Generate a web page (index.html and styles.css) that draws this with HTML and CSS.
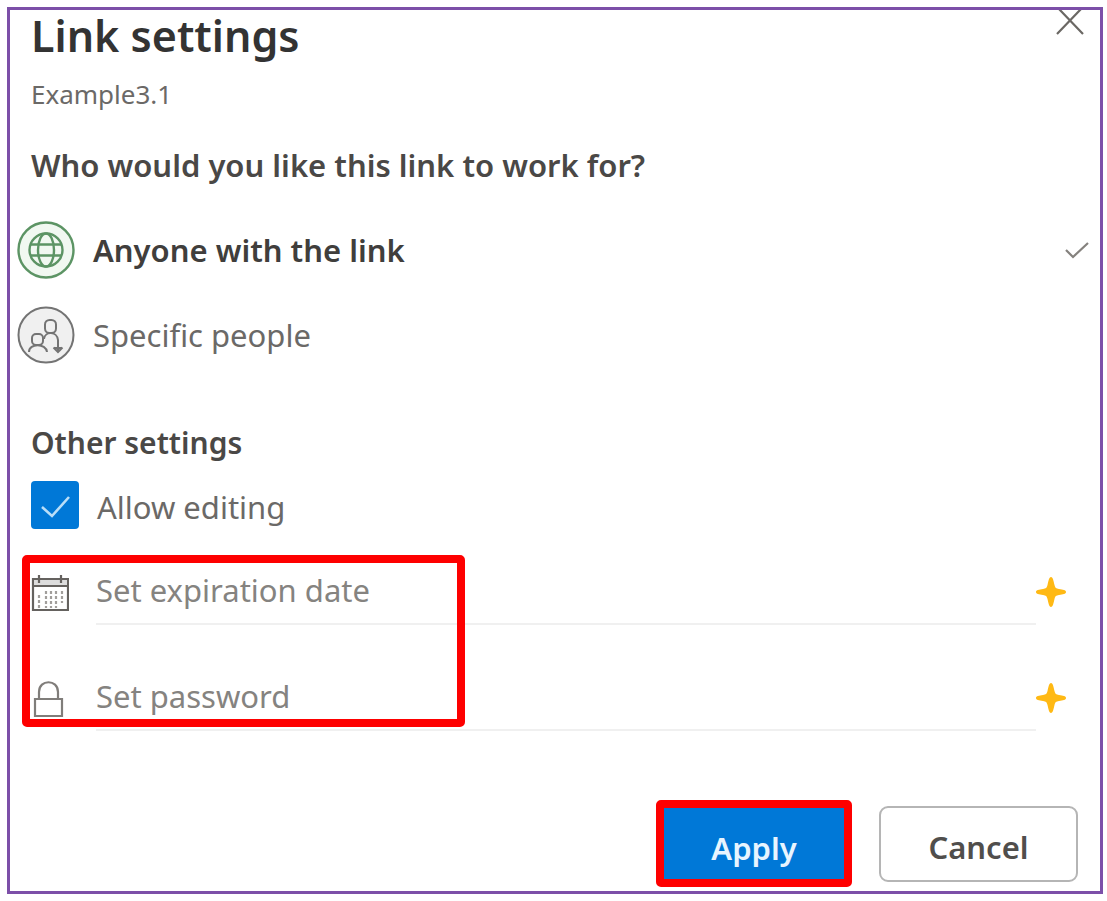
FILE: index.html
```html
<!DOCTYPE html>
<html lang="en">
<head>
<meta charset="utf-8">
<meta name="viewport" content="width=device-width, initial-scale=1">
<title>Link settings</title>
<link rel="stylesheet" href="styles.css">
</head>
<body>
<main class="dialog">
  <header class="header">
    <h1 class="title">Link settings</h1>
    <button class="close" type="button" aria-label="Close">
      <svg width="30" height="26" viewBox="0 0 30 26" fill="none" stroke="#6b6864" stroke-width="2.200"><path d="M4 -1 28 24M26 -1 2 24"/></svg>
    </button>
  </header>
  <p class="file">Example3.1</p>
  <form class="form">
    <fieldset class="group audience">
      <legend class="question">Who would you like this link to work for?</legend>
      <label class="option">
        <input class="hidden-radio" type="radio" name="audience" checked>
        <svg class="badge" viewBox="0 0 58 58" fill="none" stroke="#5c9464" stroke-width="2.400">
          <circle cx="29" cy="29" r="27.500" fill="#f1f8f1"/>
          <circle cx="29" cy="29" r="16.500"/>
          <ellipse cx="29" cy="29" rx="8" ry="16.500"/>
          <path d="M14 23.500H44M14 34.500H44"/>
        </svg>
        <span class="option-text">Anyone with the link</span>
        <svg class="tick" viewBox="0 0 24 18" fill="none" stroke="#85827e" stroke-width="2.200"><path d="M1 9 8 16 23 2"/></svg>
      </label>
      <label class="option">
        <input class="hidden-radio" type="radio" name="audience">
        <svg class="badge" viewBox="0 0 58 58" fill="none" stroke="#747474" stroke-width="2">
          <circle cx="29" cy="29" r="27.500" fill="#f0f0f0"/>
          <rect x="28" y="14" width="11" height="13" rx="4.500"/>
          <rect x="15" y="28" width="11" height="11" rx="4"/>
          <path d="M12 46C12 37 29 37 30 46M27 33C28 25 40 25 41 34V45M36.500 41.500 41 46 45.500 41.500M37 42H45"/>
        </svg>
        <span class="option-text">Specific people</span>
        <svg class="tick" viewBox="0 0 24 18" fill="none" stroke="#85827e" stroke-width="2.200"><path d="M1 9 8 16 23 2"/></svg>
      </label>
    </fieldset>
    <fieldset class="group other">
      <legend class="subtitle">Other settings</legend>
      <label class="check">
        <span class="check-box">
          <input class="check-input" type="checkbox" checked>
          <svg class="check-mark" viewBox="0 0 48 48" fill="none" stroke="#b9def8" stroke-width="2.600"><path d="M11 26 21 35 38 16"/></svg>
        </span>
        <span class="check-text">Allow editing</span>
      </label>
      <div class="fields">
        <div class="field">
          <label class="field-icon" for="expiration" aria-label="Expiration date">
            <svg width="38" height="38" viewBox="0 0 38 38" fill="none" stroke="#65625f" stroke-width="2.200">
              <path d="M2 6H37V37H2Z"/><path d="M3 7H36V12H3Z" fill="#ddd" stroke="none"/><path d="M2 13H37M8 2V10M30 2V10"/>
              <path d="M8 22V35M15 18V35M20 18V35M25 18V35M31 18V30" stroke="#a19e9b" stroke-dasharray="3 2"/>
            </svg>
          </label>
          <input class="field-input" id="expiration" type="text" placeholder="Set expiration date">
          <svg class="star" viewBox="0 0 30 30" fill="#ffb914"><path d="M15 0C17 0 17.500 4 18.500 8 19.300 11 20 11.500 23 12 27 12.700 30 13 30 15S27 17.300 23 18C20 18.500 19.300 19 18.500 22 17.500 26 17 30 15 30S12.500 26 11.500 22C10.700 19 10 18.500 7 18 3 17.300 0 17 0 15S3 12.700 7 12C10 11.500 10.700 11 11.500 8 12.500 4 13 0 15 0Z"/></svg>
        </div>
        <div class="field">
          <label class="field-icon" for="password" aria-label="Password">
            <svg width="38" height="38" viewBox="0 0 38 38" fill="none" stroke="#807d7a" stroke-width="2.200"><path d="M4 20H31V37H4ZM8 20V13C8 0 27 0 27 13V20"/></svg>
          </label>
          <input class="field-input" id="password" type="text" placeholder="Set password">
          <svg class="star" viewBox="0 0 30 30" fill="#ffb914"><path d="M15 0C17 0 17.500 4 18.500 8 19.300 11 20 11.500 23 12 27 12.700 30 13 30 15S27 17.300 23 18C20 18.500 19.300 19 18.500 22 17.500 26 17 30 15 30S12.500 26 11.500 22C10.700 19 10 18.500 7 18 3 17.300 0 17 0 15S3 12.700 7 12C10 11.500 10.700 11 11.500 8 12.500 4 13 0 15 0Z"/></svg>
        </div>
        <div class="highlight"></div>
      </div>
    </fieldset>
    <footer class="actions">
      <button class="button apply" type="submit">Apply</button>
      <button class="button cancel" type="button">Cancel</button>
    </footer>
  </form>
</main>
</body>
</html>
```
FILE: styles.css
```css
* { box-sizing: border-box; }
body {
  margin: 0;
  padding: 7px 4px 8px 7px;
  background: #fff;
  color: #6b6967;
  font: 400 31px/40px "Noto Sans", "Open Sans", sans-serif;
}
.dialog {
  border: 3px solid #7c4fa8;
  padding: 0 11px 4px 7px;
}
.header {
  display: flex;
  justify-content: space-between;
  align-items: flex-start;
  padding-left: 14px;
}
.title {
  margin: 0;
  color: #333;
  font-size: 43px;
  font-weight: 600;
  line-height: 52px;
}
.close {
  display: flex;
  margin-right: 4px;
  padding: 0;
  border: 0;
  background: none;
}
.file {
  margin: 12px 0 0;
  padding-left: 14px;
  font-size: 26px;
  line-height: 40px;
}
.form { margin: 0; }
.group {
  min-width: 0;
  margin: 0;
  padding: 0;
  border: 0;
}
.audience { margin-top: 31px; }
.other { margin-top: 32px; }
.question, .subtitle {
  padding: 0 0 0 14px;
  color: #4a4846;
  font-weight: 600;
}
.question { margin-bottom: 36px; }
.subtitle { margin-bottom: 18px; font-size: 30px; }
.option {
  display: flex;
  align-items: center;
  gap: 18px;
  height: 58px;
  margin-bottom: 27px;
}
.hidden-radio {
  position: absolute;
  opacity: 0;
}
.badge { width: 58px; height: 58px; }
.tick {
  width: 24px;
  height: 18px;
  margin-left: auto;
  visibility: hidden;
}
.hidden-radio:checked ~ .option-text { color: #403e3c; font-weight: 600; }
.hidden-radio:checked ~ .tick { visibility: visible; }
.check {
  display: flex;
  align-items: center;
  gap: 18px;
  margin-left: 14px;
}
.check-text { padding-top: 4px; }
.check-box {
  display: grid;
  width: 48px;
  height: 48px;
}
.check-input, .check-mark { grid-area: 1 / 1; }
.check-input {
  appearance: none;
  width: 48px;
  height: 48px;
  margin: 0;
  border-radius: 4px;
  background: #0078d7;
}
.check-mark { pointer-events: none; }
.fields {
  position: relative;
  display: grid;
  gap: 40px;
  margin: 30px 23px 0 14px;
}
.field {
  display: grid;
  grid-template-columns: 38px 1fr 30px;
  align-items: center;
  height: 66px;
}
.field-icon { display: flex; }
.field-input {
  min-width: 0;
  height: 66px;
  margin-left: 27px;
  padding: 0 0 2px;
  border: 0;
  border-bottom: 2px solid #f0f0f0;
  outline: 0;
  background: none;
  color: #6b6967;
  font: inherit;
}
.field-input::placeholder { color: #858380; opacity: 1; }
.star { width: 30px; height: 30px; }
.highlight {
  position: absolute;
  top: -4px;
  left: -9px;
  width: 443px;
  height: 172px;
  border: 8px solid #fe0000;
  border-radius: 5px;
  pointer-events: none;
}
.actions {
  display: flex;
  justify-content: flex-end;
  align-items: center;
  gap: 27px;
  margin: 69px 11px 0 0;
}
.button { font: 600 31px/40px "Noto Sans", "Open Sans", sans-serif; }
.apply {
  width: 196px;
  height: 87px;
  padding: 8px 0 0;
  border: 8px solid #fe0000;
  border-radius: 5px;
  background: #0078d7;
  color: #e8f5ff;
}
.cancel {
  width: 199px;
  height: 76px;
  padding: 6px 0 0;
  border: 2px solid #b5b5b5;
  border-radius: 9px;
  background: #fff;
  color: #504e4c;
}
```
